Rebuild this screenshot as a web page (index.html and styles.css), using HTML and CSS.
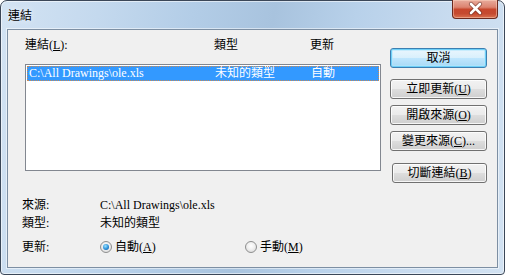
FILE: index.html
```html
<!DOCTYPE html>
<html lang="zh-Hant">
<head>
  <meta charset="UTF-8" />
  <title>連結</title>
  <link rel="stylesheet" href="styles.css">
</head>
<body>
  <div class="window">
    <div class="titlebar">
      <span class="title">連結</span>
      <div class="close">
        <svg width="44" height="18" viewBox="0 0 44 18">
          <path d="M18 4 L27 13 M27 4 L18 13" stroke="#4a1810" stroke-width="4.2" stroke-linecap="round" opacity="0.55"/>
          <path d="M18 4 L27 13 M27 4 L18 13" stroke="#ffffff" stroke-width="2.6" stroke-linecap="round"/>
        </svg>
      </div>
    </div>

    <div class="client">
      <div class="top">
        <div class="links">
          <div class="head">
            <span>連結(<u>L</u>):</span>
            <span>類型</span>
            <span>更新</span>
          </div>
          <div class="listbox">
            <div class="row selected">
              <span>C:\All Drawings\ole.xls</span>
              <span>未知的類型</span>
              <span>自動</span>
            </div>
          </div>
        </div>

        <div class="buttons">
          <div class="btn default">取消</div>
          <div class="btn">立即更新(<u>U</u>)</div>
          <div class="btn">開啟來源(<u>O</u>)</div>
          <div class="btn">變更來源(<u>C</u>)...</div>
          <div class="btn disconnect">切斷連結(<u>B</u>)</div>
        </div>
      </div>

      <div class="info">
        <div class="field">
          <span class="field-label">來源:</span>
          <span>C:\All Drawings\ole.xls</span>
        </div>
        <div class="field">
          <span class="field-label">類型:</span>
          <span>未知的類型</span>
        </div>
        <div class="field update">
          <span class="field-label">更新:</span>
          <div class="radios">
            <label class="radio auto"><span class="dot checked"></span><span>自動(<u>A</u>)</span></label>
            <label class="radio"><span class="dot"></span><span>手動(<u>M</u>)</span></label>
          </div>
        </div>
      </div>
    </div>
  </div>
</body>
</html>
```

FILE: styles.css
```css
body {
  margin: 0;
  background: #ffffff;
  font-family: "Liberation Serif", "Noto Sans CJK TC", serif;
  font-size: 12px;
  color: #000;
}

u {
  text-decoration: underline;
  text-underline-offset: 1px;
}

.window {
  width: 505px;
  height: 275px;
  box-sizing: border-box;
  border: 1px solid #3b4758;
  border-radius: 7px 7px 4px 4px;
  padding: 0 6px 6px 6px;
  background: linear-gradient(100deg, #d3e3f3 0%, #c4d9ee 18%, #b3cde7 35%, #a8c3de 50%, #b8d1ea 65%, #c8dbef 82%, #d2e2f2 100%);
  box-shadow: inset 0 0 0 1px rgba(255, 255, 255, 0.55);
  display: flex;
  flex-direction: column;
}

.titlebar {
  height: 28px;
  display: flex;
  justify-content: space-between;
  align-items: flex-start;
}

.title {
  font-family: "Noto Sans CJK TC", sans-serif;
  line-height: 14px;
  margin-top: 7px;
  margin-left: 1px;
  text-shadow: 0 0 6px rgba(255, 255, 255, 0.9);
}

.close {
  width: 44px;
  height: 18px;
  margin-top: -1px;
  border: 1px solid #6b2a1f;
  border-top: none;
  border-radius: 0 0 4px 4px;
  background: linear-gradient(#e8ab9c 0%, #dc8470 40%, #c7472d 52%, #c54a30 75%, #d9704f 100%);
  box-shadow: inset 0 0 0 1px rgba(255, 220, 200, 0.45);
}

.close svg {
  display: block;
}

.client {
  flex: 1;
  background: #f0f0f0;
  border: 1px solid #7d8fa3;
  padding: 8px 10px 0 14px;
  box-shadow: 0 0 0 1px rgba(255, 255, 255, 0.5);
}

.top {
  display: flex;
  gap: 9px;
  padding-left: 3px;
}

.links {
  width: 356px;
}

.head {
  display: grid;
  grid-template-columns: 189px 96px 1fr;
  line-height: 14px;
  height: 14px;
  margin-bottom: 12px;
}

.listbox {
  height: 107px;
  box-sizing: border-box;
  border: 1px solid #828790;
  background: #fff;
  padding: 1px;
}

.row {
  display: grid;
  grid-template-columns: 186px 96px 1fr;
  height: 15px;
  line-height: 15px;
  padding-left: 2px;
  white-space: nowrap;
}

.row.selected {
  background: #3399ff;
  color: #fff;
  outline: 1px dotted #c98a55;
  outline-offset: -1px;
}

.buttons {
  width: 97px;
  margin-top: 10px;
  display: flex;
  flex-direction: column;
}

.btn {
  height: 20px;
  box-sizing: border-box;
  border: 1px solid #707070;
  border-radius: 3px;
  background: linear-gradient(#f2f2f2 0%, #ebebeb 48%, #dddddd 52%, #cfcfcf 100%);
  box-shadow: inset 0 0 0 1px rgba(255, 255, 255, 0.8);
  text-align: center;
  line-height: 18px;
  white-space: nowrap;
}

.btn + .btn {
  margin-top: 6px;
}

.btn.default {
  border-color: #3c7fb1;
  background: linear-gradient(#eaf6fd 0%, #d9f0fc 48%, #bee6fd 52%, #a7d9f5 100%);
  box-shadow: inset 0 0 0 1px #6ed0f8, inset 0 0 0 2px rgba(180, 230, 252, 0.6);
  margin-bottom: 5px;
}

.btn.disconnect {
  margin-top: 12px;
  margin-left: 2px;
}

.info {
  margin-top: 15px;
}

.field {
  display: flex;
  line-height: 14px;
  white-space: nowrap;
}

.field + .field {
  margin-top: 4px;
}

.field.update {
  margin-top: 10px;
}

.field-label {
  width: 78px;
}

.radios {
  display: flex;
}

.radio {
  display: flex;
  align-items: center;
  gap: 3px;
}

.radio.auto {
  width: 145px;
}

.dot {
  width: 12px;
  height: 12px;
  box-sizing: border-box;
  border: 1px solid #8e8f8f;
  border-radius: 50%;
  background: radial-gradient(circle at 50% 40%, #ffffff 0%, #f0f0f0 45%, #d2d2d2 100%);
  display: flex;
  align-items: center;
  justify-content: center;
}

.dot.checked::after {
  content: "";
  width: 6px;
  height: 6px;
  border-radius: 50%;
  background: radial-gradient(circle at 40% 35%, #9be3ff 0%, #2b8fd8 55%, #0b4f93 100%);
}
```
